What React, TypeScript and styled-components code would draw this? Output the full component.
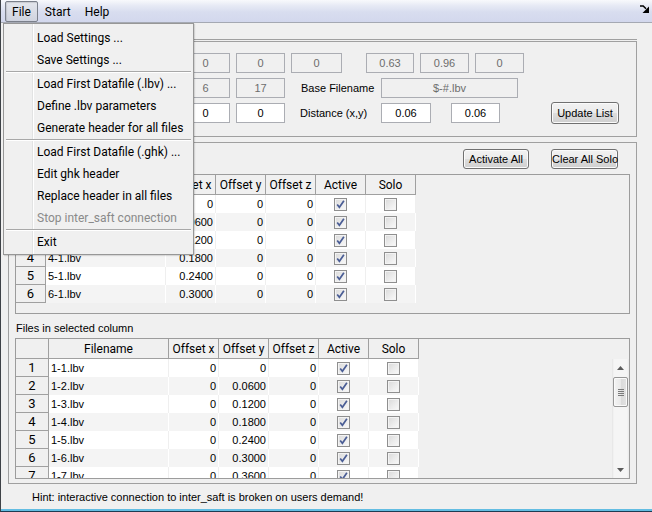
import React from 'react'
import styled, { createGlobalStyle } from 'styled-components'

const UI_FONT = `Roboto, "Noto Sans", sans-serif`
const SANS = `"Liberation Sans", Arial, sans-serif`

const GlobalStyle = createGlobalStyle`
  html, body {
    margin: 0;
    padding: 0;
    background: #f0f0f0;
  }
  #root {
    width: 652px;
    height: 512px;
  }
`

const Window = styled.div`
  position: relative;
  width: 652px;
  height: 512px;
  box-sizing: border-box;
  border-left: 1px solid #3e4247;
  border-bottom: 1px solid #1d3b52;
  box-shadow: inset 0 -2px 0 #63bde2;
  background: #f0f0f0;
  overflow: hidden;
  display: flex;
  flex-direction: column;
`

const MenuBar = styled.div`
  flex: none;
  height: 23px;
  box-sizing: border-box;
  display: flex;
  align-items: stretch;
  padding: 1px 3px 0 4px;
  border-bottom: 1px solid #a5a9b3;
  background: linear-gradient(to bottom, #f8f9fc 0%, #e7eaf5 25%, #d8ddef 55%, #d3d8ed 100%);
  font: 12px ${UI_FONT};
  color: #000;
`

const MenuBarItem = styled.div<{ $open?: boolean }>`
  display: flex;
  align-items: center;
  padding: 0 6px;
  border: 1px solid ${({ $open }) => ($open ? '#7b808b' : 'transparent')};
  border-radius: 2px;
  background: ${({ $open }) => ($open ? 'linear-gradient(to bottom, #e4e6ec, #cfd3df)' : 'none')};
  box-shadow: ${({ $open }) => ($open ? 'inset 1px 1px 1px rgba(0,0,0,0.12)' : 'none')};
`

const DockButton = styled.div`
  margin-left: auto;
  margin-top: 4px;
  width: 9px;
  height: 8px;
  display: flex;
`

const Content = styled.div`
  flex: 1;
  display: flex;
  flex-direction: column;
  padding: 16px 15px 0 7px;
`

const TopFrame = styled.div`
  border-top: 1px solid #a0a0a0;
  padding-top: 1px;
`

const SettingsPanel = styled.div`
  height: 96px;
  box-sizing: border-box;
  border: 1px solid #a0a0a0;
  padding-top: 11px;
  display: flex;
  flex-direction: column;
  gap: 5px;
`

/* the left part of these rows lies under the open File menu */
const FieldRow = styled.div`
  height: 20px;
  display: flex;
  align-items: center;
  padding-left: 172px;
`

const FieldLabel = styled.div<{ $w: number; $ml?: number }>`
  flex: none;
  width: ${({ $w }) => $w}px;
  margin-left: ${({ $ml = 0 }) => $ml}px;
  font: 11px ${SANS};
  color: #000;
  white-space: nowrap;
`

const Field = styled.div<{ $w: number; $ml?: number; $disabled?: boolean }>`
  flex: none;
  width: ${({ $w }) => $w}px;
  height: 20px;
  margin-left: ${({ $ml = 6 }) => $ml}px;
  box-sizing: border-box;
  border: 1px solid #abadb3;
  background: ${({ $disabled }) => ($disabled ? '#f0f0f0' : '#ffffff')};
  color: ${({ $disabled }) => ($disabled ? '#6d6d6d' : '#000000')};
  font: 11px ${SANS};
  line-height: 18px;
  text-align: center;
`

const PushButton = styled.button<{ $w: number; $h: number; $ml?: number }>`
  flex: none;
  width: ${({ $w }) => $w}px;
  height: ${({ $h }) => $h}px;
  margin-left: ${({ $ml = 0 }) => $ml}px;
  padding: 0;
  box-sizing: border-box;
  border: 1px solid #707070;
  border-radius: 3px;
  background: linear-gradient(to bottom, #f2f2f2 0%, #ebebeb 50%, #dddddd 51%, #cfcfcf 100%);
  box-shadow: inset 0 0 0 1px #fbfbfb;
  font: 11px ${SANS};
  color: #000;
  white-space: nowrap;
`

const ListPanel = styled.div`
  margin-top: 5px;
  height: 342px;
  box-sizing: border-box;
  border: 1px solid #a0a0a0;
  padding: 6px 6px 4px 6px;
  display: flex;
  flex-direction: column;
`

const ButtonRow = styled.div`
  flex: none;
  height: 20px;
  display: flex;
  justify-content: flex-end;
  gap: 22px;
  padding-right: 12px;
`

const TableBox = styled.div<{ $h: number; $mt?: number }>`
  flex: none;
  height: ${({ $h }) => $h}px;
  margin-top: ${({ $mt = 0 }) => $mt}px;
  box-sizing: border-box;
  border: 1px solid #9c9c9c;
  background: #f0f0f0;
  display: flex;
  flex-direction: column;
  overflow: hidden;
`

const HeaderRow = styled.div<{ $cols: string }>`
  flex: none;
  display: grid;
  grid-template-columns: ${({ $cols }) => $cols};
  height: 20px;
`

const HeaderCell = styled.div`
  box-sizing: border-box;
  border-right: 1px solid #a0a0a0;
  border-bottom: 1px solid #a0a0a0;
  background: #f0f0f0;
  display: flex;
  align-items: center;
  justify-content: center;
  font: 12px ${UI_FONT};
  color: #000;
  white-space: nowrap;
`

const TableBody = styled.div`
  flex: 1;
  min-height: 0;
  display: flex;
`

const RowsGrid = styled.div<{ $cols: string }>`
  flex: none;
  display: grid;
  grid-template-columns: ${({ $cols }) => $cols};
  grid-auto-rows: 18px;
  align-content: start;
  overflow: hidden;
`

const RowHead = styled.div`
  box-sizing: border-box;
  border-right: 1px solid #a0a0a0;
  border-bottom: 1px solid #a0a0a0;
  background: #f0f0f0;
  display: flex;
  align-items: center;
  justify-content: center;
  font: 13px ${UI_FONT};
  color: #000;
`

const Cell = styled.div<{ $alt: boolean; $align?: 'left' | 'right' | 'center' }>`
  box-sizing: border-box;
  border-right: 1px solid ${({ $alt }) => ($alt ? '#ffffff' : '#efefef')};
  background: ${({ $alt }) => ($alt ? '#f4f4f4' : '#ffffff')};
  display: flex;
  align-items: center;
  justify-content: ${({ $align = 'right' }) =>
    $align === 'left' ? 'flex-start' : $align === 'center' ? 'center' : 'flex-end'};
  padding: 0 2px;
  font: 11px ${SANS};
  color: #000;
  white-space: nowrap;
  overflow: hidden;
`

const CheckBox = styled.span`
  width: 13px;
  height: 13px;
  box-sizing: border-box;
  border: 1px solid #8f8f8f;
  background: linear-gradient(135deg, #d9d9d9 0%, #ececec 55%, #fafafa 100%);
  box-shadow: inset 0 0 0 1px #f3f3f3;
  display: flex;
  align-items: center;
  justify-content: center;
`

const SectionLabel = styled.div`
  flex: none;
  height: 24px;
  box-sizing: border-box;
  padding: 8px 0 0 1px;
  font: 11px ${SANS};
  line-height: 13px;
  color: #000;
`

const Scrollbar = styled.div`
  margin-left: auto;
  width: 17px;
  display: flex;
  flex-direction: column;
  background: linear-gradient(to right, #e4e4e4 0, #f5f5f5 2px, #f5f5f5 15px, #e9e9e9 100%);
`

const ScrollArrow = styled.div`
  flex: none;
  height: 17px;
  display: flex;
  align-items: center;
  justify-content: center;
`

const ScrollTrack = styled.div`
  flex: 1;
  padding: 1px 1px 0 1px;
`

const ScrollThumb = styled.div`
  height: 30px;
  box-sizing: border-box;
  border: 1px solid #979797;
  border-radius: 2px;
  background: linear-gradient(to right, #f4f4f4 0%, #e9e9e9 50%, #dadada 51%, #e3e3e3 100%);
  box-shadow: inset 0 0 0 1px #fafafa;
  display: flex;
  align-items: center;
  justify-content: center;
`

const Hint = styled.div`
  margin: 7px 0 0 24px;
  font: 11px ${SANS};
  line-height: 13px;
  color: #000;
`

const DropMenu = styled.div`
  position: absolute;
  left: 2px;
  top: 23px;
  z-index: 10;
  width: 191px;
  box-sizing: border-box;
  border: 1px solid #979797;
  padding: 3px 2px 1px 2px;
  background: linear-gradient(to right, #f0f0f0 0, #f0f0f0 28px, #e2e3e3 28px, #e2e3e3 29px, #ffffff 29px, #ffffff 30px, #f0f0f0 30px);
  box-shadow: 1px 1px 1px rgba(0, 0, 0, 0.12);
  font: 12px ${UI_FONT};
`

const MenuItem = styled.div<{ $disabled?: boolean }>`
  height: 22px;
  line-height: 22px;
  padding-left: 31px;
  color: ${({ $disabled }) => ($disabled ? '#8a8a8a' : '#000')};
  white-space: nowrap;
`

const MenuSeparator = styled.div`
  height: 2px;
  box-sizing: border-box;
  border-top: 1px solid #a8a8a8;
  border-bottom: 1px solid #ffffff;
`

type Row = { name: string; x: string; y: string; z: string }

const fmt = (v: number) => (v === 0 ? '0' : v.toFixed(4))

const colRows: Row[] = Array.from({ length: 6 }, (_, i) => ({
  name: `${i + 1}-1.lbv`,
  x: fmt(i * 0.06),
  y: '0',
  z: '0',
}))

const fileRows: Row[] = Array.from({ length: 7 }, (_, i) => ({
  name: `1-${i + 1}.lbv`,
  x: '0',
  y: fmt(i * 0.06),
  z: '0',
}))

const Tick = () => (
  <svg width="11" height="11" viewBox="0 0 11 11">
    <path d="M2.2 5.4 L4.4 8.3 L8.9 1.8" stroke="#4a5d95" strokeWidth="1.7" fill="none" />
  </svg>
)

const DataTable = ({
  rows,
  headW,
  height,
  scroll,
  mt,
}: {
  rows: Row[]
  headW: number
  height: number
  scroll?: boolean
  mt?: number
}) => {
  const cols = `${headW}px 120px repeat(5, 50px)`
  return (
    <TableBox $h={height} $mt={mt}>
      <HeaderRow $cols={cols}>
        <HeaderCell />
        <HeaderCell>Filename</HeaderCell>
        <HeaderCell>Offset x</HeaderCell>
        <HeaderCell>Offset y</HeaderCell>
        <HeaderCell>Offset z</HeaderCell>
        <HeaderCell>Active</HeaderCell>
        <HeaderCell>Solo</HeaderCell>
      </HeaderRow>
      <TableBody>
        <RowsGrid $cols={cols}>
          {rows.map((r, i) => {
            const alt = i % 2 === 1
            return (
              <React.Fragment key={r.name}>
                <RowHead>{i + 1}</RowHead>
                <Cell $alt={alt} $align="left">{r.name}</Cell>
                <Cell $alt={alt}>{r.x}</Cell>
                <Cell $alt={alt}>{r.y}</Cell>
                <Cell $alt={alt}>{r.z}</Cell>
                <Cell $alt={alt} $align="center">
                  <CheckBox>
                    <Tick />
                  </CheckBox>
                </Cell>
                <Cell $alt={alt} $align="center">
                  <CheckBox />
                </Cell>
              </React.Fragment>
            )
          })}
        </RowsGrid>
        {scroll && (
          <Scrollbar>
            <ScrollArrow>
              <svg width="7" height="4" viewBox="0 0 7 4">
                <polygon points="3.5,0 7,4 0,4" fill="#5b5b5b" />
              </svg>
            </ScrollArrow>
            <ScrollTrack>
              <ScrollThumb>
                <svg width="6" height="7" viewBox="0 0 6 7">
                  <path d="M0 0.5 H6 M0 2.5 H6 M0 4.5 H6 M0 6.5 H6" stroke="#7a7a7a" strokeWidth="1" />
                </svg>
              </ScrollThumb>
            </ScrollTrack>
            <ScrollArrow>
              <svg width="7" height="4" viewBox="0 0 7 4">
                <polygon points="0,0 7,0 3.5,4" fill="#5b5b5b" />
              </svg>
            </ScrollArrow>
          </Scrollbar>
        )}
      </TableBody>
    </TableBox>
  )
}

export default function App() {
  return (
    <>
      <GlobalStyle />
      <Window>
        <MenuBar>
          <MenuBarItem $open>File</MenuBarItem>
          <MenuBarItem>Start</MenuBarItem>
          <MenuBarItem>Help</MenuBarItem>
          <DockButton>
            <svg width="9" height="8" viewBox="0 0 9 8">
              <path d="M0 1 H3.2 L6 3.8" stroke="#000" strokeWidth="1.5" fill="none" />
              <polygon points="9,1.5 9,8 2.5,8" fill="#000" />
            </svg>
          </DockButton>
        </MenuBar>

        <Content>
          <TopFrame>
            <SettingsPanel>
              <FieldRow>
                <Field $w={49} $ml={0} $disabled>0</Field>
                <Field $w={49} $disabled>0</Field>
                <Field $w={51} $disabled>0</Field>
                <Field $w={48} $ml={24} $disabled>0.63</Field>
                <Field $w={49} $disabled>0.96</Field>
                <Field $w={49} $disabled>0</Field>
              </FieldRow>
              <FieldRow>
                <Field $w={49} $ml={0} $disabled>6</Field>
                <Field $w={49} $disabled>17</Field>
                <FieldLabel $w={80} $ml={16}>Base Filename</FieldLabel>
                <Field $w={137} $ml={0} $disabled>$-#.lbv</Field>
              </FieldRow>
              <FieldRow>
                <Field $w={49} $ml={0}>0</Field>
                <Field $w={49}>0</Field>
                <FieldLabel $w={81} $ml={15}>Distance (x,y)</FieldLabel>
                <Field $w={50} $ml={0}>0.06</Field>
                <Field $w={49} $ml={20}>0.06</Field>
                <PushButton $w={68} $h={22} $ml={51}>Update List</PushButton>
              </FieldRow>
            </SettingsPanel>
          </TopFrame>

          <ListPanel>
            <ButtonRow>
              <PushButton $w={66} $h={20}>Activate All</PushButton>
              <PushButton $w={67} $h={20}>Clear All Solo</PushButton>
            </ButtonRow>
            <DataTable rows={colRows} headW={30} height={140} mt={5} />
            <SectionLabel>Files in selected column</SectionLabel>
            <DataTable rows={fileRows} headW={33} height={141} scroll />
          </ListPanel>

          <Hint>Hint: interactive connection to inter_saft is broken on users demand!</Hint>
        </Content>

        <DropMenu>
          <MenuItem>Load Settings ...</MenuItem>
          <MenuItem>Save Settings ...</MenuItem>
          <MenuSeparator />
          <MenuItem>Load First Datafile (.lbv) ...</MenuItem>
          <MenuItem>Define .lbv parameters</MenuItem>
          <MenuItem>Generate header for all files</MenuItem>
          <MenuSeparator />
          <MenuItem>Load First Datafile (.ghk) ...</MenuItem>
          <MenuItem>Edit ghk header</MenuItem>
          <MenuItem>Replace header in all files</MenuItem>
          <MenuItem $disabled>Stop inter_saft connection</MenuItem>
          <MenuSeparator />
          <MenuItem>Exit</MenuItem>
        </DropMenu>
      </Window>
    </>
  )
}
